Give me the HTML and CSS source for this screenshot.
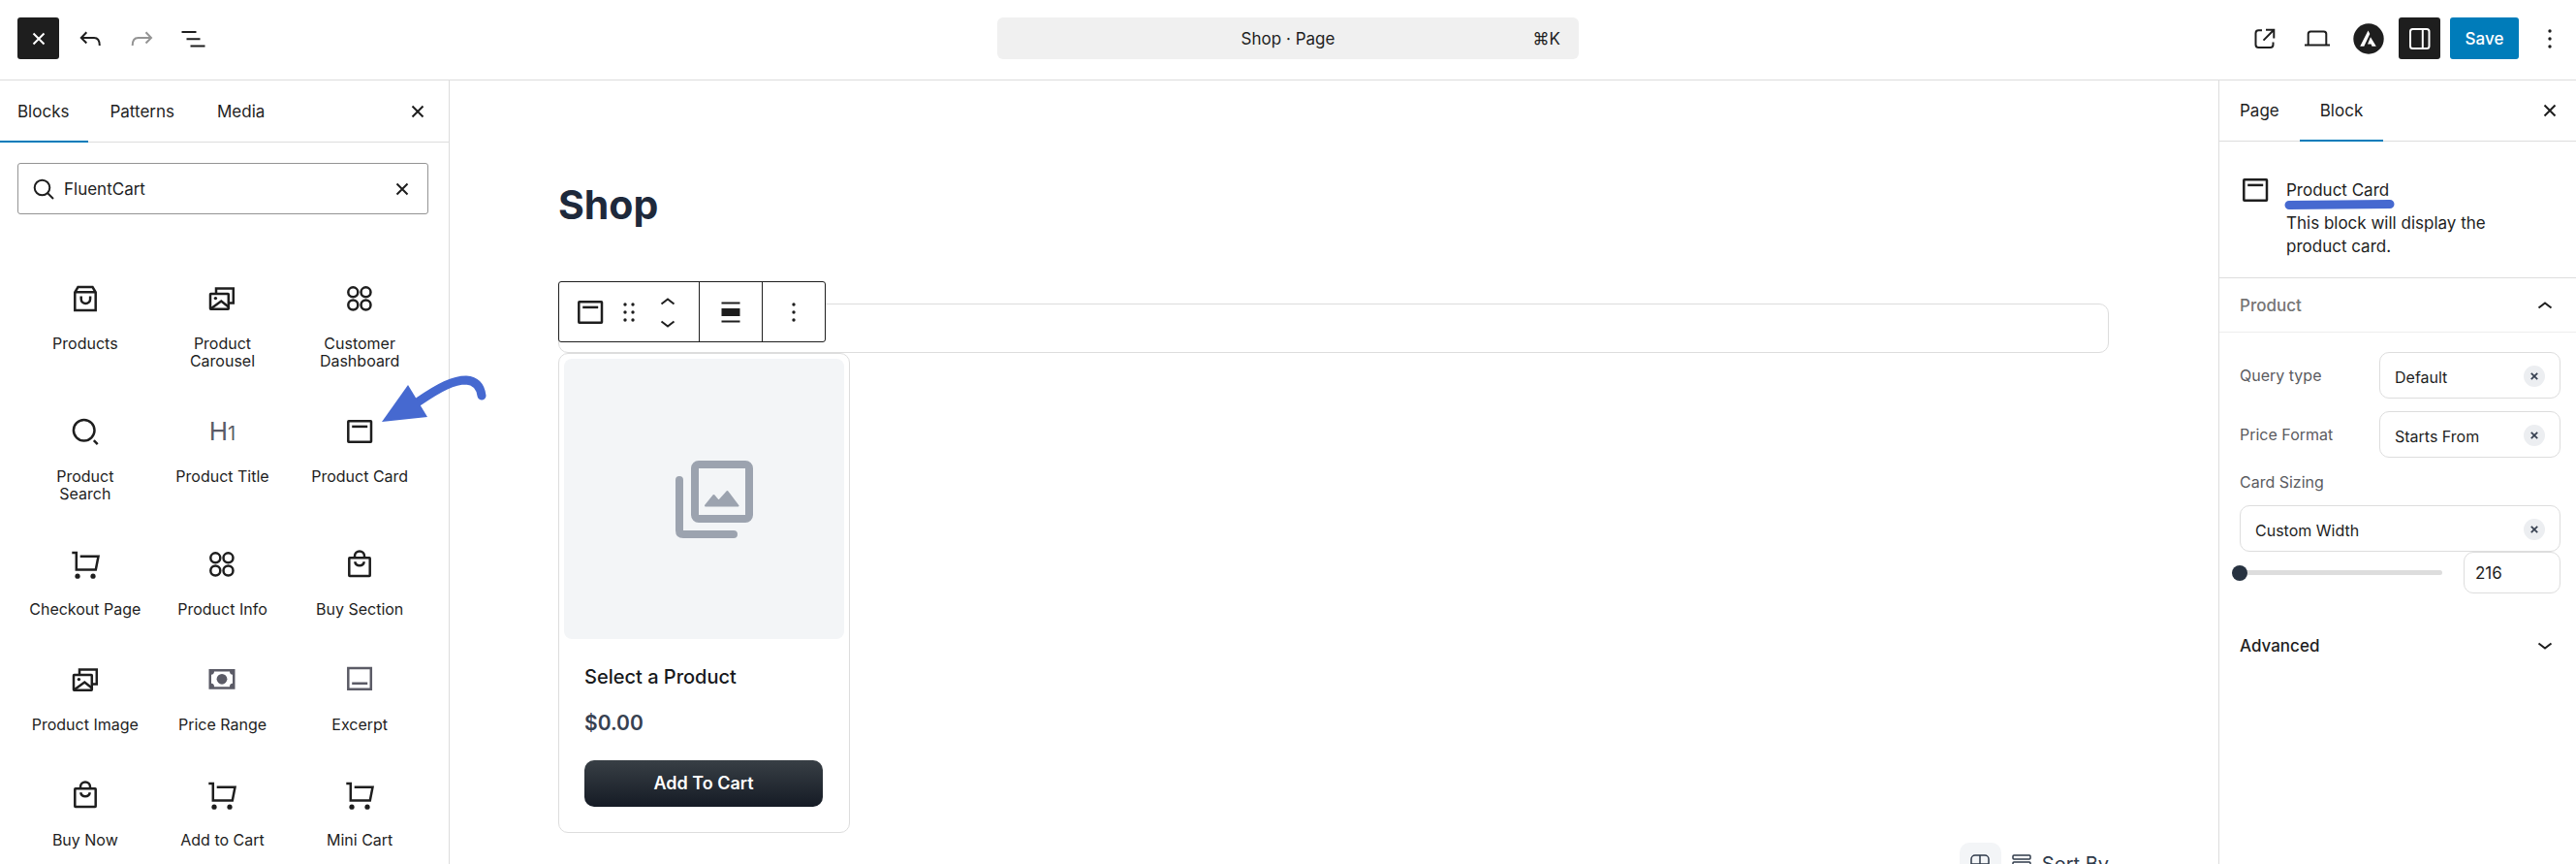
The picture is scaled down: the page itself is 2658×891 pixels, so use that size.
FILE: index.html
```html
<!DOCTYPE html>
<html lang="en">

<head>
   <meta charset="UTF-8">
   <meta name="viewport" content="width=device-width, initial-scale=1.0">
   <title>Shop · Page</title>
   <link rel="stylesheet" href="styles.css">
</head>

<body>
   <!-- shared icons -->
   <svg class="sprite" aria-hidden="true">
      <symbol id="i-close" viewBox="0 0 24 24"><path d="M6.5 6.5l11 11M17.5 6.5l-11 11"/></symbol>
      <symbol id="i-up" viewBox="0 0 24 24"><path d="M5.500 14.500l6.500-5 6.500 5"/></symbol>
      <symbol id="i-down" viewBox="0 0 24 24"><path d="M5.500 9.500l6.500 5 6.500-5"/></symbol>
      <symbol id="i-dots" viewBox="0 0 36 36"><g class="fill"><circle cx="18" cy="10" r="1.7"/><circle cx="18" cy="18" r="1.7"/><circle cx="18" cy="26" r="1.7"/></g></symbol>
      <symbol id="i-card" viewBox="0 0 36 36"><rect x="6.300" y="7.300" width="23.700" height="21.500" rx=".5"/><path d="M10.200 12.900h16"/></symbol>
      <symbol id="i-images" viewBox="0 0 36 36"><path d="M12 13V7.600h17.800v14.900H25"/><rect x="6" y="13" width="18.800" height="15.800" rx=".5"/><path d="M7 28l10.300-7.500 7.500 6"/><circle class="fill" cx="11.400" cy="17.600" r="1.7"/></symbol>
      <symbol id="i-circles" viewBox="0 0 36 36"><circle cx="11.300" cy="11.300" r="5"/><circle cx="24.500" cy="11.300" r="5"/><circle cx="11.300" cy="24.500" r="5"/><circle cx="24.500" cy="24.500" r="5"/></symbol>
      <symbol id="i-cart" viewBox="0 0 36 36"><path d="M4.300 6h4.500v17.600h20l2.700-13.800H12.700"/><circle class="fill" cx="10" cy="30.200" r="2.600"/><circle class="fill" cx="26" cy="30.200" r="2.600"/></symbol>
      <symbol id="i-bag" viewBox="0 0 36 36"><rect x="7.300" y="11.300" width="21.400" height="18.600" rx=".5"/><path d="M13 11v-1.500a5 5 0 0 1 10 0V11M13.200 15.300a4.900 5 0 0 0 9.600 0"/></symbol>
   </svg>

   <header class="topbar">
      <div class="topbar-left">
         <button class="icon-btn dark" aria-label="Close inserter"><svg class="icon-24"><use href="#i-close"/></svg></button>
         <button class="icon-btn" aria-label="Undo"><svg class="icon-36" viewBox="0 0 36 36"><path d="M14.300 11.300l-5.500 5.700 5.500 5.500M9 17h13q5.800 0 5.800 8"/></svg></button>
         <button class="icon-btn muted" aria-label="Redo"><svg class="icon-36" viewBox="0 0 36 36"><path d="M22.500 11.300l5.500 5.700-5.500 5.500M28 17H14.500q-5.800 0-5.800 8"/></svg></button>
         <button class="icon-btn" aria-label="Document overview"><svg class="icon-36" viewBox="0 0 36 36"><path d="M6.500 11h15M11.500 18.200h14M15.500 25.500h15"/></svg></button>
      </div>
      <button class="command-bar">
         <span class="command-title">Shop · Page</span>
         <span class="command-key">⌘K</span>
      </button>
      <div class="topbar-right">
         <a href="#" class="icon-btn" aria-label="View page"><svg class="icon-36" viewBox="0 0 36 36"><path d="M14 9.200H10.500a3 3 0 0 0-3 3V24a3 3 0 0 0 3 3H22.500a3 3 0 0 0 3-3V21.500M18 8.800h8.300v8.600M26 9L15.500 19.600"/></svg></a>
         <button class="icon-btn" aria-label="View"><svg class="icon-36" viewBox="0 0 36 36"><path d="M8.700 24V13a2.500 2.500 0 0 1 2.500-2.500h13.600a2.500 2.500 0 0 1 2.500 2.500v11M5 24.500h26"/></svg></button>
         <button class="icon-btn" aria-label="Astra settings"><svg class="icon-36" viewBox="0 0 36 36"><circle cx="18" cy="18" r="15.700" fill="#1e1e1e" stroke="none"/><path fill="#fff" stroke="none" d="M17.500 9.500l1.800 3.600-6 12.700H9.200zM20 16.200l5.800 9.600h-4.300l-.9-2.200H17z"/></svg></button>
         <button class="icon-btn dark" aria-label="Settings"><svg class="icon-36" viewBox="0 0 36 36"><rect x="8" y="8" width="19.500" height="20" rx="2.500"/><path d="M20.800 8v20"/></svg></button>
         <button class="save-btn">Save</button>
         <button class="icon-btn" aria-label="Options"><svg class="icon-36"><use href="#i-dots"/></svg></button>
      </div>
   </header>

   <div class="editor">
      <aside class="inserter">
         <div class="tabs">
            <button class="tab active">Blocks</button>
            <button class="tab">Patterns</button>
            <button class="tab">Media</button>
            <button class="tab-close" aria-label="Close"><svg class="icon-24"><use href="#i-close"/></svg></button>
         </div>
         <div class="search-box">
            <svg class="icon-24" viewBox="0 0 24 24"><circle cx="10.500" cy="10.500" r="7.800"/><path d="M16 16l6 6"/></svg>
            <input type="text" value="FluentCart" aria-label="Search">
            <button aria-label="Reset search"><svg class="icon-24"><use href="#i-close"/></svg></button>
         </div>
         <div class="block-list">
            <button class="block-item">
               <svg class="icon-36" viewBox="0 0 36 36"><path d="M7.300 11.300l3.200-5.300h15l3.200 5.300V30H7.300zM7.300 11.300h21.400M13.700 15.500v2.700a4.700 4.700 0 0 0 9.400 0v-2.700"/></svg>
               <span>Products</span>
            </button>
            <button class="block-item">
               <svg class="icon-36"><use href="#i-images"/></svg>
               <span>Product<br>Carousel</span>
            </button>
            <button class="block-item">
               <svg class="icon-36"><use href="#i-circles"/></svg>
               <span>Customer<br>Dashboard</span>
            </button>
            <button class="block-item">
               <svg class="icon-36" viewBox="0 0 36 36"><circle cx="16.700" cy="16.800" r="10.800"/><path d="M26.800 27.200l3.900 3.900"/></svg>
               <span>Product<br>Search</span>
            </button>
            <button class="block-item">
               <span class="heading-icon">H<small>1</small></span>
               <span>Product Title</span>
            </button>
            <button class="block-item">
               <svg class="icon-36"><use href="#i-card"/></svg>
               <span>Product Card</span>
            </button>
            <button class="block-item">
               <svg class="icon-36"><use href="#i-cart"/></svg>
               <span>Checkout Page</span>
            </button>
            <button class="block-item">
               <svg class="icon-36"><use href="#i-circles"/></svg>
               <span>Product Info</span>
            </button>
            <button class="block-item">
               <svg class="icon-36"><use href="#i-bag"/></svg>
               <span>Buy Section</span>
            </button>
            <button class="block-item">
               <svg class="icon-36"><use href="#i-images"/></svg>
               <span>Product Image</span>
            </button>
            <button class="block-item gray">
               <svg class="icon-36" viewBox="0 0 36 36"><path class="fill" fill-rule="evenodd" d="M4.500 7h27v20.700h-27zM10 9.500a3.300 3.300 0 0 1-3 3.300v9a3.300 3.300 0 0 1 3 3.400h16a3.300 3.300 0 0 1 3-3.400v-9a3.300 3.300 0 0 1-3-3.300z"/><circle class="fill" cx="18" cy="17.300" r="5.400"/></svg>
               <span>Price Range</span>
            </button>
            <button class="block-item gray">
               <svg class="icon-36" viewBox="0 0 36 36"><path d="M6.300 6h23.500v21.800H6.300zM10.200 21.700h16"/></svg>
               <span>Excerpt</span>
            </button>
            <button class="block-item">
               <svg class="icon-36"><use href="#i-bag"/></svg>
               <span>Buy Now</span>
            </button>
            <button class="block-item">
               <svg class="icon-36"><use href="#i-cart"/></svg>
               <span>Add to Cart</span>
            </button>
            <button class="block-item">
               <svg class="icon-36"><use href="#i-cart"/></svg>
               <span>Mini Cart</span>
            </button>
         </div>
         <!-- arrow pointing at Product Card -->
         <svg class="arrow" viewBox="0 0 110 60" aria-hidden="true">
            <path d="M40 34C62 19 76 12 89 12q14 1 16 16" fill="none" stroke="#4669d0" stroke-width="9" stroke-linecap="round"/>
            <path d="M2 55l27-38 20 33z" fill="#4669d0" stroke="none"/>
         </svg>
      </aside>

      <main class="canvas">
         <div class="content">
            <h1 class="page-title">Shop</h1>
            <div class="selected-block">
               <div class="toolbar">
                  <div class="toolbar-group">
                     <button aria-label="Product Card"><svg class="icon-36"><use href="#i-card"/></svg></button>
                     <button class="drag" aria-label="Drag"><svg class="icon-36" viewBox="0 0 36 36"><g class="fill"><circle cx="14" cy="10" r="1.700"/><circle cx="22" cy="10" r="1.700"/><circle cx="14" cy="18" r="1.700"/><circle cx="22" cy="18" r="1.700"/><circle cx="14" cy="26" r="1.700"/><circle cx="22" cy="26" r="1.700"/></g></svg></button>
                     <div class="movers">
                        <button aria-label="Move up"><svg class="icon-24"><use href="#i-up"/></svg></button>
                        <button aria-label="Move down"><svg class="icon-24"><use href="#i-down"/></svg></button>
                     </div>
                  </div>
                  <div class="toolbar-group">
                     <button aria-label="Align"><svg class="icon-36" viewBox="0 0 36 36"><path d="M8.500 8.500h19M8.500 27.500h19" stroke-width="2"/><path class="fill" d="M8.500 14h19v8h-19z"/></svg></button>
                  </div>
                  <div class="toolbar-group">
                     <button aria-label="Options"><svg class="icon-36"><use href="#i-dots"/></svg></button>
                  </div>
               </div>
            </div>
            <article class="product-card">
               <div class="product-image">
                  <svg viewBox="0 0 80 80"><rect x="20" y="4" width="56" height="56" rx="4" fill="none" stroke="#9ca3af" stroke-width="8"/><path d="M4 20v52q0 4 4 4h52" fill="none" stroke="#9ca3af" stroke-width="8" stroke-linecap="round"/><path d="M31 46.500l8.500-10.500 5 6 9-10 11 14.500z" fill="#9ca3af" stroke="#9ca3af" stroke-width="2" stroke-linejoin="round"/></svg>
               </div>
               <div class="product-body">
                  <h3>Select a Product</h3>
                  <p class="price">$0.00</p>
                  <button class="cart-btn">Add To Cart</button>
               </div>
            </article>
            <div class="sort-row">
               <button class="view-btn" aria-label="Grid view"><svg viewBox="0 0 20 20"><rect x="1" y="1" width="18" height="18" rx="4"/><path d="M10 1v18M1 10h18"/></svg></button>
               <button class="view-list" aria-label="List view"><svg viewBox="0 0 20 20"><rect x="1" y="1" width="18" height="4" rx="1"/><rect x="1" y="8" width="18" height="4" rx="1"/><rect x="1" y="15" width="18" height="4" rx="1"/></svg></button>
               <span>Sort By</span>
            </div>
         </div>
      </main>

      <aside class="settings">
         <div class="tabs">
            <button class="tab">Page</button>
            <button class="tab active">Block</button>
            <button class="tab-close" aria-label="Close"><svg class="icon-24"><use href="#i-close"/></svg></button>
         </div>
         <div class="block-info">
            <svg class="icon-36"><use href="#i-card"/></svg>
            <div>
               <h2>Product Card
                  <svg class="underline" viewBox="0 0 114 12" aria-hidden="true"><path d="M5 6.500L109 5.500" stroke="#4669d0" stroke-width="9" stroke-linecap="round"/></svg>
               </h2>
               <p>This block will display the product card.</p>
            </div>
         </div>
         <button class="panel-head">Product <svg class="icon-24"><use href="#i-up"/></svg></button>
         <div class="panel-body">
            <div class="field">
               <label for="query">Query type</label>
               <div class="select">
                  <select id="query"><option>Default</option></select>
                  <button aria-label="Clear query type"><svg viewBox="0 0 24 24"><use href="#i-close"/></svg></button>
               </div>
            </div>
            <div class="field">
               <label for="price">Price Format</label>
               <div class="select">
                  <select id="price"><option>Starts From</option></select>
                  <button aria-label="Clear price format"><svg viewBox="0 0 24 24"><use href="#i-close"/></svg></button>
               </div>
            </div>
            <label class="field-label" for="sizing">Card Sizing</label>
            <div class="select">
               <select id="sizing"><option>Custom Width</option></select>
               <button aria-label="Clear card sizing"><svg viewBox="0 0 24 24"><use href="#i-close"/></svg></button>
            </div>
            <div class="range-row">
               <input type="range" min="216" max="600" value="216" aria-label="Card width">
               <input type="text" class="width-input" value="216" aria-label="Card width in pixels">
            </div>
         </div>
         <button class="panel-head advanced">Advanced <svg class="icon-24"><use href="#i-down"/></svg></button>
      </aside>
   </div>
</body>

</html>
```
FILE: styles.css
```css
* {
   margin: 0;
   padding: 0;
   box-sizing: border-box;
}

body {
   height: 100vh;
   overflow: hidden;
   display: flex;
   flex-direction: column;
   background: #fff;
   color: #1e1e1e;
   font-family: Inter, "Liberation Sans", sans-serif;
   font-size: 17px;
   line-height: 24px;
}

button, input, select {
   font: inherit;
   color: inherit;
   background: none;
   border: none;
   outline: none;
}

button {
   cursor: pointer;
}

svg {
   display: block;
   flex: none;
   fill: none;
   stroke: currentColor;
   stroke-width: 2.5;
}

.fill {
   fill: currentColor;
   stroke: none;
}

.sprite {
   position: absolute;
   width: 0;
   height: 0;
}

.icon-24 {
   width: 24px;
   height: 24px;
   stroke-width: 2;
}

.icon-36 {
   width: 36px;
   height: 36px;
}

/* top bar */
.topbar {
   display: grid;
   grid-template-columns: 1fr 600px 1fr;
   align-items: center;
   height: 83px;
   flex: none;
   padding-bottom: 3px;
   border-bottom: 1px solid #ddd;
}

.topbar-left, .topbar-right {
   display: flex;
   align-items: center;
   gap: 10px;
}

.topbar-left {
   padding-left: 18px;
}

.topbar-right {
   justify-content: flex-end;
   padding-right: 6px;
}

.icon-btn {
   display: flex;
   align-items: center;
   justify-content: center;
   width: 43px;
   height: 43px;
   border-radius: 3px;
   color: #1e1e1e;
}

.icon-btn .icon-36 {
   stroke-width: 2;
}

.icon-btn.dark {
   background: #1e1e1e;
   color: #fff;
}

.icon-btn.muted {
   color: #949494;
}

.command-bar {
   display: grid;
   grid-template-columns: 1fr auto 1fr;
   align-items: center;
   height: 43px;
   padding: 0 19px;
   background: #f0f0f0;
   border-radius: 6px;
}

.command-title {
   grid-column: 2;
}

.command-key {
   text-align: right;
}

.save-btn {
   width: 71px;
   height: 43px;
   background: #007cba;
   color: #fff;
   font-weight: 500;
   border-radius: 3px;
}

/* layout under the top bar */
.editor {
   display: flex;
   flex: 1;
   min-height: 0;
}

.inserter {
   position: relative;
   flex: none;
   width: 464px;
   border-right: 1px solid #ddd;
}

.canvas {
   flex: 1;
   overflow: hidden;
   padding: 103px 113px 0 112px;
}

.settings {
   flex: none;
   width: 369px;
   border-left: 1px solid #ddd;
}

/* tabs */
.tabs {
   display: flex;
   height: 64px;
   border-bottom: 1px solid #ddd;
}

.tab {
   padding: 0 21px;
   margin-bottom: -1px;
   border-bottom: 2px solid transparent;
}

.tab.active {
   border-bottom-color: #007cba;
}

.inserter .tab {
   padding: 2px 22px 0;
}

.inserter .tab:first-child {
   padding-left: 18px;
   padding-right: 20px;
}

.tab-close {
   margin-left: auto;
   padding: 0 20px;
}

.settings .tabs {
   height: 63px;
}

.settings .tab-close {
   padding: 0 15px;
}

/* block search */
.search-box {
   display: flex;
   align-items: center;
   gap: 9px;
   height: 53px;
   margin: 21px 21px 0 18px;
   padding: 0 14px;
   border: 1px solid #949494;
   border-radius: 3px;
}

.search-box input {
   flex: 1;
   min-width: 0;
}

.block-list {
   display: grid;
   grid-template-columns: repeat(3, 1fr);
   padding: 46px 21px 0 17px;
}

.block-item {
   display: flex;
   flex-direction: column;
   align-items: center;
   gap: 19px;
   padding: 23px 8px;
   font-size: 16px;
   line-height: 18px;
}

.block-item.gray svg, .heading-icon {
   color: #5b5b66;
}

.heading-icon {
   height: 36px;
   font-size: 26px;
   line-height: 36px;
}

.heading-icon small {
   font-size: 20px;
}

.arrow {
   position: absolute;
   left: 392px;
   top: 297px;
   width: 110px;
   height: 60px;
   z-index: 2;
}

/* canvas */
.content {
   max-width: 1600px;
   margin: 0 auto;
}

.page-title {
   margin-bottom: 77px;
   color: #1e293b;
   font-size: 41px;
   line-height: 50px;
   font-weight: 700;
}

.selected-block {
   position: relative;
   height: 51px;
   border: 1px solid #ddd;
   border-radius: 10px;
}

.toolbar {
   position: absolute;
   left: -1px;
   bottom: 10px;
   display: flex;
   height: 63px;
   background: #fff;
   border: 1px solid #1e1e1e;
   border-radius: 3px;
}

.toolbar-group {
   display: flex;
   align-items: center;
   padding: 0 14px;
}

.toolbar-group + .toolbar-group {
   border-left: 1px solid #1e1e1e;
}

.toolbar .drag {
   margin: 0 4px;
}

.movers {
   display: flex;
   flex-direction: column;
}

.movers button {
   height: 23px;
}

.movers svg {
   margin: 0 6px;
}

.product-card {
   width: 301px;
   padding: 5px;
   border: 1px solid #ddd;
   border-radius: 10px;
}

.product-image {
   display: flex;
   align-items: center;
   justify-content: center;
   aspect-ratio: 1;
   padding-left: 20px;
   background: #f3f5f7;
   border-radius: 8px;
}

.product-image svg {
   width: 80px;
   height: 80px;
}

.product-body {
   padding: 25px 22px 21px 21px;
}

.product-body h3 {
   color: #17191c;
   font-size: 20px;
   line-height: 28px;
   font-weight: 500;
}

.price {
   margin: 20px 0 24px;
   color: #374151;
   font-size: 21px;
   line-height: 28px;
   font-weight: 600;
}

.cart-btn {
   width: 100%;
   height: 48px;
   background: linear-gradient(#383f45, #151b25);
   color: #fff;
   font-size: 18px;
   font-weight: 600;
   border-radius: 10px;
}

.sort-row {
   display: flex;
   align-items: center;
   justify-content: flex-end;
   gap: 11px;
   margin-top: 10px;
   color: #2f3a4a;
   font-size: 20px;
}

.sort-row svg {
   width: 20px;
   height: 20px;
   stroke-width: 1.5;
}

.view-btn {
   display: flex;
   align-items: center;
   justify-content: center;
   width: 43px;
   height: 43px;
   background: #f3f5f7;
   border-radius: 10px;
}

/* settings sidebar */
.block-info {
   display: flex;
   gap: 17px;
   padding: 38px 48px 20px 22px;
   border-bottom: 1px solid #ddd;
}

.block-info .icon-36 {
   margin: -6px -3px 0;
}

.block-info h2 {
   position: relative;
   margin-bottom: 10px;
   font-size: 17px;
   font-weight: 400;
}

.underline {
   position: absolute;
   left: -2px;
   top: 21px;
   width: 114px;
   height: 12px;
}

.panel-head {
   display: flex;
   align-items: center;
   justify-content: space-between;
   width: 100%;
   height: 56px;
   padding: 0 20px 0 21px;
   border-bottom: 1px solid #eee;
   color: #757575;
   font-weight: 500;
}

.panel-head svg {
   color: #1e1e1e;
}

.panel-body {
   padding: 20px 16px 0 21px;
   font-size: 16px;
}

.field {
   display: grid;
   grid-template-columns: 1fr 187px;
   align-items: center;
   margin-bottom: 13px;
}

.field label, .field-label {
   color: #5b5b5f;
}

.field-label {
   display: block;
   margin-bottom: 12px;
}

.select {
   position: relative;
}

.select select {
   appearance: none;
   display: block;
   width: 100%;
   height: 48px;
   padding: 3px 48px 0 15px;
   border: 1px solid #ddd;
   border-radius: 10px;
}

.select button {
   position: absolute;
   top: 14px;
   right: 16px;
   width: 22px;
   height: 22px;
   padding: 4px;
   background: #eceef1;
   border-radius: 50%;
   color: #374151;
}

.select button svg {
   width: 14px;
   height: 14px;
   stroke-width: 3;
}

.range-row {
   display: flex;
   align-items: center;
   justify-content: space-between;
}

.range-row input[type=range] {
   appearance: none;
   width: 217px;
   height: 5px;
   margin-left: -8px;
   background: linear-gradient(#ddd, #ddd) 8px 0 no-repeat;
   border-radius: 3px;
}

.range-row input[type=range]::-webkit-slider-thumb {
   appearance: none;
   width: 16px;
   height: 16px;
   background: #273240;
   border-radius: 50%;
}

.width-input {
   width: 100px;
   height: 43px;
   padding: 0 11px;
   border: 1px solid #ddd;
   border-radius: 10px;
   font-size: 17px;
}

.advanced {
   margin-top: 26px;
   border: none;
   color: #1e1e1e;
}
```
